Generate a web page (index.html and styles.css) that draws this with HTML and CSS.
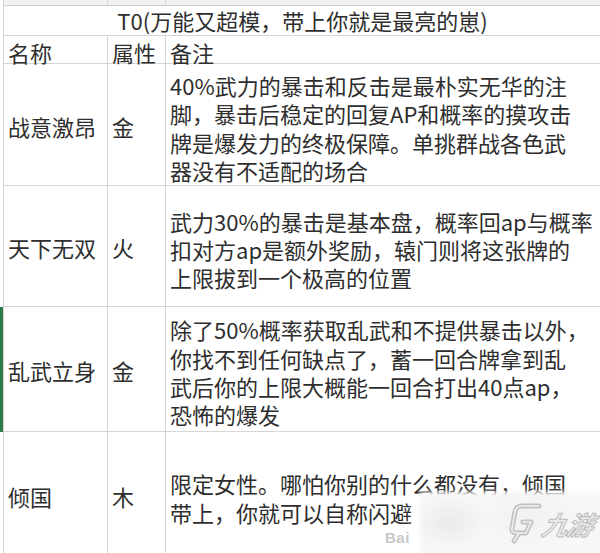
FILE: index.html
```html
<!DOCTYPE html>
<html lang="zh-CN">
<head>
<meta charset="utf-8">
<title>T0</title>
<link rel="stylesheet" href="styles.css">
</head>
<body>
<div class="sheet">
  <div class="table">
    <div class="row strip"><div class="c"></div><div class="c"></div><div class="c"></div></div>
    <div class="title">T0(万能又超模，带上你就是最亮的崽)</div>
    <div class="row head">
      <div class="c name">名称</div>
      <div class="c attr">属性</div>
      <div class="c note">备注</div>
    </div>
    <div class="row r1">
      <div class="c name">战意激昂</div>
      <div class="c attr">金</div>
      <div class="c note">
        <span>40%武力的暴击和反击是最朴实无华的注</span>
        <span>脚，暴击后稳定的回复AP和概率的摸攻击</span>
        <span>牌是爆发力的终极保障。单挑群战各色武</span>
        <span>器没有不适配的场合</span>
      </div>
    </div>
    <div class="row r2">
      <div class="c name">天下无双</div>
      <div class="c attr">火</div>
      <div class="c note">
        <span>武力30%的暴击是基本盘，概率回ap与概率</span>
        <span>扣对方ap是额外奖励，辕门则将这张牌的</span>
        <span>上限拔到一个极高的位置</span>
      </div>
    </div>
    <div class="row r3 selected">
      <div class="c name">乱武立身</div>
      <div class="c attr">金</div>
      <div class="c note">
        <span>除了50%概率获取乱武和不提供暴击以外，</span>
        <span>你找不到任何缺点了，蓄一回合牌拿到乱</span>
        <span>武后你的上限大概能一回合打出40点ap，</span>
        <span>恐怖的爆发</span>
      </div>
    </div>
    <div class="row r4">
      <div class="c name">倾国</div>
      <div class="c attr">木</div>
      <div class="c note">
        <span>限定女性。哪怕你别的什么都没有，倾国</span>
        <span>带上，你就可以自称闪避</span>
      </div>
    </div>
  </div>

  <div class="baidu">Bai</div>
  <div class="watermark">
    <div class="wm-bg"></div>
    <svg class="wm-logo" width="34" height="42" viewBox="0 0 34 42">
      <g fill="none" stroke-linejoin="round" stroke-linecap="round">
        <path d="M31 4 L14 4 Q8 4 7 10 L4 26 Q3 31 9 31 L18 31 L23 20 L15 20" stroke="#c2c2c2" stroke-width="5"/>
        <path d="M11 31 L6 39" stroke="#c2c2c2" stroke-width="5"/>
        <path d="M31 4 L14 4 Q8 4 7 10 L4 26 Q3 31 9 31 L18 31 L23 20 L15 20" stroke="#f0f0f0" stroke-width="1.6"/>
        <path d="M11 31 L6 39" stroke="#f0f0f0" stroke-width="1.6"/>
      </g>
    </svg>
    <span class="wm-text">九游</span>
  </div>
</div>
</body>
</html>
```

FILE: styles.css
```css
html, body {
  margin: 0;
  padding: 0;
  background: #ffffff;
}

.sheet {
  position: relative;
  width: 600px;
  height: 553px;
  overflow: hidden;
  padding-left: 3px;
  box-sizing: border-box;
  font-family: "Noto Sans CJK SC", "Noto Sans", sans-serif;
  color: #2e2e2e;
  font-size: 22px;
}

.table {
  width: 640px;
  border-left: 1px solid #d4d4d4;
  box-sizing: border-box;
}

.row {
  display: grid;
  grid-template-columns: 104px 58px 1fr;
  border-bottom: 1px solid #d6d6d6;
  box-sizing: border-box;
}

.c {
  border-right: 1px solid #d6d6d6;
  box-sizing: border-box;
  display: flex;
  align-items: center;
  white-space: nowrap;
  line-height: 28px;
}

.strip {
  height: 6px;
  background: #f1f1f1;
  border-bottom-color: #cfcfcf;
}

.title {
  height: 30px;
  width: 597px;
  border-bottom: 1px solid #d6d6d6;
  box-sizing: border-box;
  text-align: center;
  line-height: 29px;
  white-space: nowrap;
}

.head { height: 28px; }
.r1 { height: 122px; }
.r2 { height: 121px; }
.r3 { height: 125px; }
.r4 { height: 126px; }

.name { padding-left: 4px; }
.attr { padding-left: 4px; }

.note {
  padding-left: 4px;
  flex-direction: column;
  align-items: flex-start;
  justify-content: center;
  padding-top: 6px;
}

.note span {
  display: block;
  line-height: 28.3px;
}

.head .c, .r1 .name, .r1 .attr, .r2 .name, .r2 .attr,
.r3 .name, .r3 .attr, .r4 .name, .r4 .attr {
  padding-top: 2px;
}

.selected {
  position: relative;
}

.selected::before {
  content: "";
  position: absolute;
  left: -4px;
  top: 0;
  bottom: -1px;
  width: 3px;
  background: #2f7a4c;
}

.baidu {
  position: absolute;
  left: 385px;
  top: 529px;
  font-family: "Liberation Sans", Arial, sans-serif;
  font-weight: bold;
  font-size: 15px;
  color: #c8c8c8;
  letter-spacing: 0.5px;
}

.watermark {
  position: absolute;
  left: 420px;
  top: 492px;
  width: 190px;
  height: 70px;
  display: flex;
  align-items: center;
  gap: 1px;
  padding-left: 88px;
  box-sizing: border-box;
  padding-bottom: 8px;
}

.wm-bg {
  position: absolute;
  inset: 0 0 0 0;
  background:
    radial-gradient(ellipse 40px 26px at 30px 30px, #eaeaea, rgba(234,234,234,0) 100%),
    radial-gradient(ellipse 50px 30px at 110px 25px, #f1f1f1, rgba(241,241,241,0) 100%),
    #f7f7f7;
  filter: blur(2px);
}

.wm-logo {
  position: relative;
  flex: none;
}

.wm-text {
  position: relative;
  font-family: "Noto Sans CJK SC", sans-serif;
  font-style: italic;
  font-weight: bold;
  font-size: 26px;
  color: #eaeaea;
  -webkit-text-stroke: 1px #bdbdbd;
  letter-spacing: -1px;
  transform: skewX(-12deg);
}
```
